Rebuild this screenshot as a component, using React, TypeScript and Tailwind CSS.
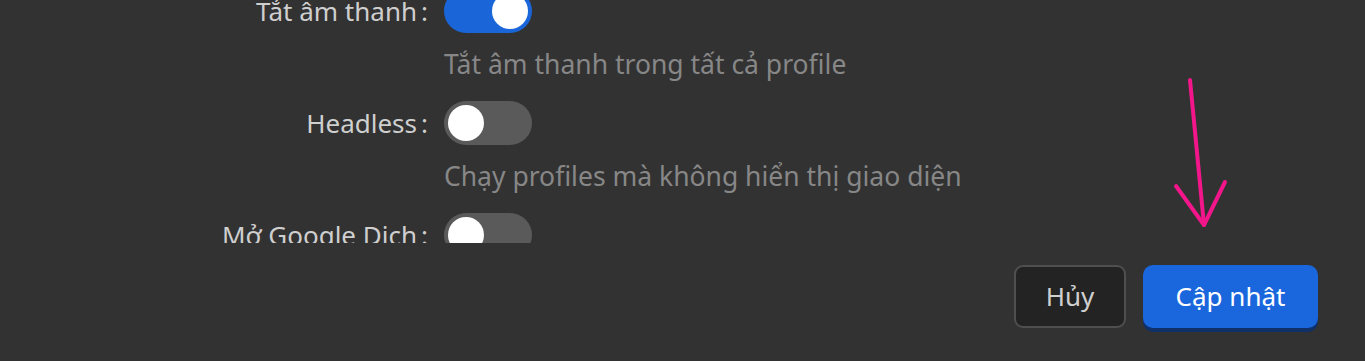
import React, { useState } from 'react';

interface SettingRow {
    label: string;
    description?: string;
    on: boolean;
}

const rows: SettingRow[] = [
    { label: 'Tắt âm thanh', description: 'Tắt âm thanh trong tất cả profile', on: true },
    { label: 'Headless', description: 'Chạy profiles mà không hiển thị giao diện', on: false },
    { label: 'Mở Google Dịch', description: 'Tự động mở Google Dịch khi khởi chạy', on: false },
];

function Toggle({ on, onChange }: { on: boolean; onChange: () => void }) {
    return (
        <button
            type="button"
            onClick={onChange}
            className={`relative h-[44px] w-[88px] shrink-0 rounded-full transition-colors ${on ? 'bg-[#1a66d8]' : 'bg-[#5a5a5a]'}`}
        >
            <span
                className={`absolute top-[4px] h-[36px] w-[36px] rounded-full bg-white transition-all ${on ? 'left-[48px]' : 'left-[4px]'}`}
            />
        </button>
    );
}

export default function App() {
    const [values, setValues] = useState(rows.map((r) => r.on));

    return (
        <div
            className="relative flex h-[361px] w-full flex-col overflow-hidden bg-[#323232]"
            style={{ fontFamily: '"Noto Sans", "Open Sans", sans-serif' }}
        >
            {/* scrolled settings list */}
            <div className="h-[243px] overflow-hidden">
                <div className="mt-[-11px] flex flex-col">
                    {rows.map((row, i) => (
                        <div key={row.label} className="grid grid-cols-[428px_1fr] gap-x-4">
                            <div className="flex h-[44px] items-center justify-end text-[26px] text-[#cfcfcf]">
                                {row.label}
                                <span className="ml-[4px]">:</span>
                            </div>
                            <div className="flex h-[44px] items-center">
                                <Toggle
                                    on={values[i]}
                                    onChange={() => setValues((v) => v.map((x, j) => (j === i ? !x : x)))}
                                />
                            </div>
                            <div />
                            <div className="mt-[15px] mb-[21px] h-[32px] text-[26.5px] leading-[32px] text-[#878787]">
                                {row.description}
                            </div>
                        </div>
                    ))}
                </div>
            </div>

            {/* footer */}
            <div className="flex justify-end gap-[17px] pt-[22px] pr-[47px]">
                <button
                    type="button"
                    className="h-[63px] w-[112px] rounded-[9px] border-2 border-[#4f4f4f] bg-[#232323] text-[26px] text-[#cfcfcf]"
                >
                    Hủy
                </button>
                <button
                    type="button"
                    className="h-[63px] w-[175px] rounded-[10px] bg-[#1a67dd] text-[26px] text-white shadow-[0_4px_0_#10306a]"
                >
                    Cập nhật
                </button>
            </div>

            {/* annotation arrow */}
            <svg className="pointer-events-none absolute left-0 top-0" width="1365" height="361">
                <g stroke="#f2168a" strokeWidth="4" strokeLinecap="round" fill="none">
                    <line x1="1190" y1="80" x2="1204" y2="225" />
                    <polyline points="1176,186 1204,225 1225,182" strokeLinejoin="round" />
                </g>
            </svg>
        </div>
    );
}
